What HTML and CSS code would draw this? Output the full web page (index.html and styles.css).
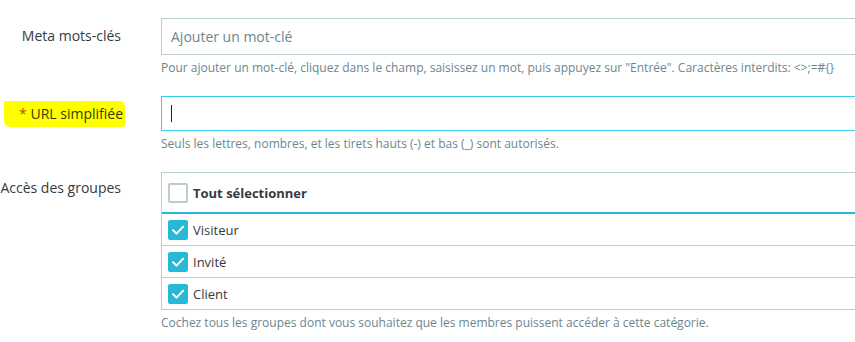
FILE: index.html
```html
<!DOCTYPE html>
<html lang="fr">
<head>
<meta charset="utf-8">
<link rel="stylesheet" href="styles.css">
</head>
<body>
<div class="form">
  <div class="row row-keywords">
    <div class="label"><span>Meta mots-clés</span></div>
    <div class="field">
      <div class="input"><span class="placeholder">Ajouter un mot-clé</span></div>
      <p class="help">Pour ajouter un mot-clé, cliquez dans le champ, saisissez un mot, puis appuyez sur "Entrée". Caractères interdits: &lt;&gt;;=#{}</p>
    </div>
  </div>
  <div class="row row-url">
    <div class="label"><span class="highlight"><span class="req">*</span> URL simplifiée</span></div>
    <div class="field">
      <div class="input focused"><span class="caret"></span></div>
      <p class="help">Seuls les lettres, nombres, et les tirets hauts (-) et bas (_) sont autorisés.</p>
    </div>
  </div>
  <div class="row row-groups">
    <div class="label label-groups"><span>Accès des groupes</span></div>
    <div class="field">
      <div class="table">
        <div class="thead">
          <span class="cb"></span><span class="th">Tout sélectionner</span>
        </div>
        <div class="tr"><span class="cb checked"><svg viewBox="0 0 20 20" width="20" height="20"><path d="M5 10.2 L8.5 13.6 L15.2 6.6" fill="none" stroke="#fff" stroke-width="2" stroke-linecap="round" stroke-linejoin="round"/></svg></span><span class="td">Visiteur</span></div>
        <div class="tr"><span class="cb checked"><svg viewBox="0 0 20 20" width="20" height="20"><path d="M5 10.2 L8.5 13.6 L15.2 6.6" fill="none" stroke="#fff" stroke-width="2" stroke-linecap="round" stroke-linejoin="round"/></svg></span><span class="td">Invité</span></div>
        <div class="tr"><span class="cb checked"><svg viewBox="0 0 20 20" width="20" height="20"><path d="M5 10.2 L8.5 13.6 L15.2 6.6" fill="none" stroke="#fff" stroke-width="2" stroke-linecap="round" stroke-linejoin="round"/></svg></span><span class="td">Client</span></div>
      </div>
      <p class="help">Cochez tous les groupes dont vous souhaitez que les membres puissent accéder à cette catégorie.</p>
    </div>
  </div>
</div>
</body>
</html>
```
FILE: styles.css
```css
html, body {
  margin: 0;
  padding: 0;
  background: #fff;
  overflow: hidden;
}
body {
  width: 855px;
  height: 342px;
  font-family: "Open Sans", "Noto Sans", sans-serif;
  color: #363a41;
}
.form {
  padding-top: 18px;
  width: 900px;
}
.row {
  display: grid;
  grid-template-columns: 121px 740px;
  column-gap: 40px;
}
.row-keywords { margin-bottom: 20px; }
.row-url { margin-bottom: 20px; }
.label {
  display: flex;
  justify-content: flex-end;
  align-items: flex-start;
  font-size: 14px;
  line-height: 19px;
  padding-top: 8px;
  white-space: nowrap;
}
.label-groups { padding-top: 6px; }
.highlight {
  background: #ffff00;
  color: #363a00;
  padding: 3px 2px 4px 15px;
  margin-top: -3px;
  margin-right: -4px;
  border-radius: 2px 5px 3px 6px;
}
.req { color: #c74a00; }
.input {
  height: 35px;
  border: 1px solid #bbcdd2;
  display: flex;
  align-items: center;
  padding-left: 9px;
  font-size: 14px;
}
.input.focused {
  border-color: #3ccbea;
  height: 33px;
}
.placeholder { color: #6c868e; }
.caret {
  display: block;
  width: 1px;
  height: 17px;
  background: #222;
}
.help {
  margin: 5px 0 0 0;
  font-size: 12px;
  line-height: 16px;
  color: #6c868e;
  white-space: nowrap;
}
.table {
  border: 1px solid #bbcdd2;
}
.thead {
  height: 39px;
  border-bottom: 2px solid #25b9d7;
  display: flex;
  align-items: center;
  padding-left: 6px;
}
.th {
  font-weight: 700;
  font-size: 13px;
  margin-left: 5px;
}
.tr {
  height: 31px;
  border-bottom: 1px solid #bbcdd2;
  display: flex;
  align-items: center;
  padding-left: 6px;
}
.tr:last-child { border-bottom: none; }
.td {
  font-size: 13px;
  margin-left: 5px;
}
.cb {
  box-sizing: border-box;
  width: 20px;
  height: 20px;
  border: 2px solid #bbcdd2;
  border-radius: 2px;
  display: block;
  flex: none;
}
.cb.checked {
  border: none;
  background: #25b9d7;
}
.cb svg { display: block; }
```
